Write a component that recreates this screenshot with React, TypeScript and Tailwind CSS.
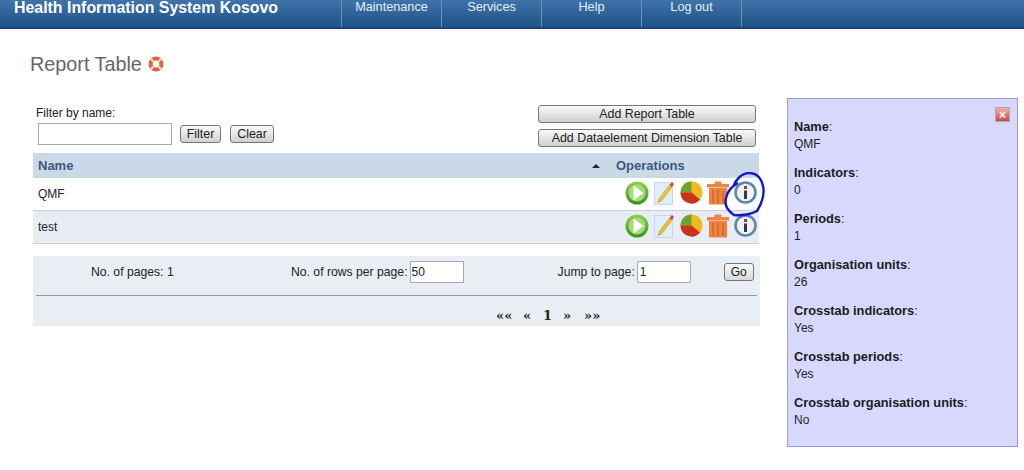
const navItems = ["Maintenance", "Services", "Help", "Log out"];

const details = [
  { label: "Name", value: "QMF" },
  { label: "Indicators", value: "0" },
  { label: "Periods", value: "1" },
  { label: "Organisation units", value: "26" },
  { label: "Crosstab indicators", value: "Yes" },
  { label: "Crosstab periods", value: "Yes" },
  { label: "Crosstab organisation units", value: "No" },
];

const greyButton =
  "rounded-[3px] border border-[#777] bg-gradient-to-b from-[#fafafa] to-[#cfcfcf] text-[12.4px] leading-none text-[#222]";

const LifeBuoy = () => (
  <svg width="16" height="16" viewBox="0 0 17 17">
    <circle cx="8.5" cy="8.5" r="5.8" fill="none" stroke="#d9693a" strokeWidth="4.4" />
    <path d="M3.2 3.2 5.6 5.6M13.8 3.2 11.4 5.6M3.2 13.8 5.6 11.4M13.8 13.8 11.4 11.4" stroke="#f3e6dc" strokeWidth="2" />
  </svg>
);

const PlayIcon = () => (
  <svg width="24" height="24" viewBox="0 0 24 24">
    <defs>
      <linearGradient id="play" x1="0" y1="0" x2="0" y2="1">
        <stop offset="0" stopColor="#8fcf55" />
        <stop offset="1" stopColor="#3d8f1f" />
      </linearGradient>
    </defs>
    <circle cx="12" cy="12" r="11.5" fill="url(#play)" />
    <circle cx="12" cy="12" r="8.5" fill="#a5dc75" />
    <path d="M8.5 4.5 18.5 12 8.5 19.5Z" fill="#fff" />
  </svg>
);

const EditIcon = () => (
  <svg width="21" height="24" viewBox="0 0 21 24">
    <rect x="0.5" y="1.5" width="18" height="22" fill="#dfeefc" stroke="#c3d9ef" />
    <path d="M5 18 4 21.5 7.5 20 18 6 15.5 4Z" fill="#f2c230" stroke="#b98a1c" strokeWidth="0.6" />
    <path d="M15.5 4 18 6 20 3 18 1Z" fill="#c9443c" />
  </svg>
);

const PieIcon = () => (
  <svg width="23" height="23" viewBox="0 0 23 23">
    <circle cx="11.5" cy="11.5" r="11" fill="#f1b921" />
    <path d="M11.5 11.5 0.5 11.5A11 11 0 0 1 11.5 0.5Z" fill="#6fa32c" />
    <path d="M11.5 11.5 0.5 11.5A11 11 0 0 0 20 18.5Z" fill="#c9331c" />
  </svg>
);

const TrashIcon = () => (
  <svg width="22" height="24" viewBox="0 0 22 24">
    <rect x="7.5" y="0.5" width="7" height="3" fill="#e98a50" />
    <rect x="0" y="3" width="22" height="3.5" fill="#ee8442" />
    <path d="M2 7H20V23.5H2Z" fill="#ee8442" />
    <path d="M6 9V22M11 9V22M16 9V22" stroke="#d06a2c" strokeWidth="1.6" />
  </svg>
);

const InfoIcon = () => (
  <svg width="23" height="23" viewBox="0 0 23 23">
    <circle cx="11.5" cy="11.5" r="10" fill="#eef2f6" stroke="#5c87ab" strokeWidth="2.6" />
    <rect x="10" y="5" width="3" height="3" fill="#a23b2c" />
    <rect x="10" y="9.5" width="3" height="8.5" fill="#383838" />
  </svg>
);

const Operations = () => (
  <div className="-mt-[3px] flex items-center">
    <div className="w-[29px]"><PlayIcon /></div>
    <div className="w-[26px]"><EditIcon /></div>
    <div className="w-[27px]"><PieIcon /></div>
    <div className="w-[27px]"><TrashIcon /></div>
    <InfoIcon />
  </div>
);

const App = () => {
  return (
    <div className="relative h-[470px] w-[1024px] overflow-hidden bg-white font-['Liberation_Sans',Arial,sans-serif] text-[12px] text-[#222]">
      {/* Barra superior */}
      <header className="flex h-[29px] border-b-2 border-[#17466f] bg-gradient-to-b from-[#3f73a9] to-[#1f5388] text-white">
        <div className="w-[341px] pl-[14px] text-[15.9px] leading-[15px] font-bold">
          Health Information System Kosovo
        </div>
        <nav className="flex border-r border-[#6a90b8]">
          {navItems.map((item) => (
            <div
              key={item}
              className="w-[100px] border-l border-[#6a90b8] text-center text-[12.7px] leading-[14px] text-[#e6eef6]"
            >
              {item}
            </div>
          ))}
        </nav>
      </header>

      <div className="flex">
        <main className="ml-[30px] w-[729px]">
          <h1 className="mt-[25px] flex h-[22px] items-center gap-[6px] text-[19.8px] leading-none font-normal text-[#666]">
            Report Table
            <span className="-mt-[2px]"><LifeBuoy /></span>
          </h1>

          {/* Filtro y botones */}
          <div className="mt-[29px] flex justify-between pr-[3px] pl-[6px]">
            <div className="pt-px">
              <div className="text-[12px] leading-[14px]">Filter by name:</div>
              <div className="mt-[3px] ml-[2px] flex items-center">
                <input className="h-[22px] w-[134px] border border-[#aaa] bg-white" />
                <button className={`${greyButton} ml-[8px] h-[18px] w-[41px]`}>Filter</button>
                <button className={`${greyButton} ml-[9px] h-[18px] w-[44px]`}>Clear</button>
              </div>
            </div>
            <div className="flex flex-col gap-[6px]">
              <button className={`${greyButton} h-[18px] w-[218px]`}>Add Report Table</button>
              <button className={`${greyButton} h-[18px] w-[218px]`}>Add Dataelement Dimension Table</button>
            </div>
          </div>

          {/* Tabla */}
          <div className="mt-[6px] ml-[3px] w-[726px]">
            <div className="flex h-[25px] items-center bg-[#c9d9e8] text-[13px] font-bold text-[#39597f]">
              <span className="ml-[5px] flex-1">Name</span>
              <span className="mr-[16px] h-0 w-0 border-x-[4px] border-b-[4px] border-x-transparent border-b-[#222]" />
              <span className="w-[143px]">Operations</span>
            </div>
            <div className="flex h-[33px] items-center border-b border-[#c5cfdb] bg-white pr-[2px] pl-[5px]">
              <span className="flex-1">QMF</span>
              <Operations />
            </div>
            <div className="flex h-[33px] items-center border-b border-[#c5cfdb] bg-[#e8edf5] pr-[2px] pl-[5px]">
              <span className="flex-1">test</span>
              <Operations />
            </div>
          </div>

          {/* Paginacion */}
          <div className="mt-[12px] ml-[3px] h-[70px] w-[727px] bg-[#e9eef5] px-[3px]">
            <div className="flex h-[40px] items-center border-b border-[#999] pb-[7px] text-[12.2px]">
              <span className="ml-[55px] w-[200px]">No. of pages: 1</span>
              <span>No. of rows per page:</span>
              <input readOnly value="50" className="ml-[2px] h-[22px] w-[54px] border border-[#aaa] bg-white pl-[1px] text-[12px]" />
              <span className="ml-[94px]">Jump to page:</span>
              <input readOnly value="1" className="ml-[2px] h-[22px] w-[54px] border border-[#aaa] bg-white pl-[2px] text-[12px]" />
              <button className="ml-[33px] h-[18px] w-[30px] rounded-[3px] border border-[#777] bg-gradient-to-b from-[#fafafa] to-[#d8d8d8] text-[12px] leading-none">Go</button>
            </div>
            <div className="flex h-[30px] items-center pt-[9px] pl-[460px] font-['DejaVu_Serif',serif] font-bold text-[#222]">
              <span className="w-[27px] text-[13px]">««</span>
              <span className="w-[20px] text-[13px]">«</span>
              <span className="w-[20px] text-[13px]">1</span>
              <span className="w-[21px] text-[13px]">»</span>
              <span className="text-[13px]">»»</span>
            </div>
          </div>
        </main>

        {/* Panel de detalles */}
        <aside className="mt-[69px] ml-[28px] h-[349px] w-[231px] border border-[#9a9ad6] bg-[#d8d8ff] pt-[20px] pl-[6px]">
          <div className="relative">
            <button className="absolute -top-[12px] right-[7px] flex h-[15px] w-[15px] items-center justify-center border border-[#aaa] bg-gradient-to-b from-[#eeb0b0] to-[#c9454a] text-[12px] leading-none font-bold text-white">
              ×
            </button>
            {details.map((d) => (
              <div key={d.label} className="mb-[13px] text-[12px] leading-[16px]">
                <div className="text-[12.8px] font-bold text-[#1c1c1c]">
                  {d.label}<span className="font-normal">:</span>
                </div>
                <div className="pt-px">{d.value}</div>
              </div>
            ))}
          </div>
        </aside>
      </div>

      {/* Marca a mano sobre el icono */}
      <svg className="absolute top-[172px] left-[724px]" width="42" height="45" viewBox="0 0 42 45" fill="none">
        <path
          d="M9 15C12 7 18 1 25 1 32 1 37 5 39 14 41 23 38 31 33 39 28 42 17 44 10 43 4 39 0 33 2 26 3 20 8 14 14 11"
          stroke="#1418d0"
          strokeWidth="2.4"
        />
      </svg>
    </div>
  );
};

export default App;
